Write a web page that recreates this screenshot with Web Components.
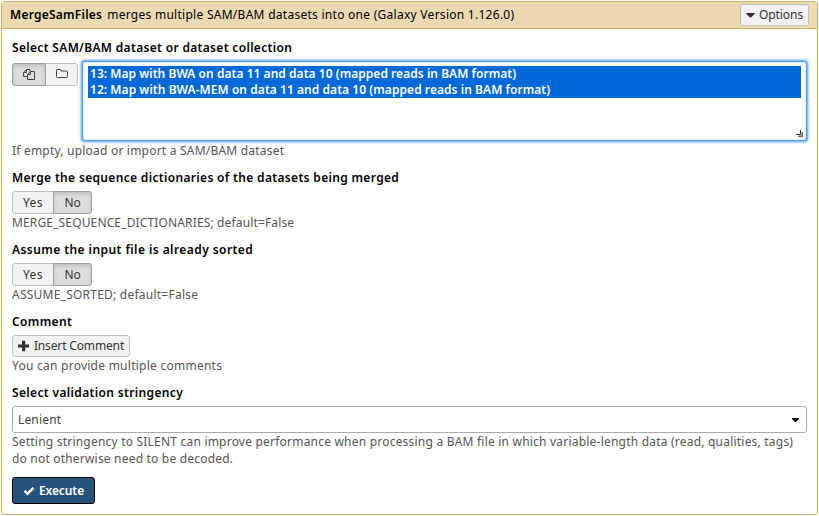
<!DOCTYPE html>
<html lang="en"><head><meta charset="utf-8"><title>MergeSamFiles</title>
<style>
html,body{margin:0;background:#fff}
body{font:12px/16px "Noto Sans","Open Sans",sans-serif;color:#000;width:819px;height:516px;overflow:hidden}
</style></head><body>
<tool-panel>
  <fit-text slot="title" w="92" bold>MergeSamFiles</fit-text>
  <fit-text slot="title" w="407">merges multiple SAM/BAM datasets into one (Galaxy Version 1.126.0)</fit-text>
  <ui-button slot="action" style="width:69px;height:22px;--gap:4px"><ui-icon name="caret"></ui-icon><fit-text w="44">Options</fit-text></ui-button>

  <form-row style="height:130px;--gap:5px">
    <fit-text slot="label" w="280" bold>Select SAM/BAM dataset or dataset collection</fit-text>
    <div style="display:flex;gap:4px;height:81px">
      <button-group style="margin-top:2px">
        <ui-button class="first" pressed style="width:34px"><ui-icon name="files"></ui-icon></ui-button>
        <ui-button class="last" style="width:33px"><ui-icon name="folder"></ui-icon></ui-button>
      </button-group>
      <multi-select>
        <select-option><fit-text w="426" bold>13: Map with BWA on data 11 and data 10 (mapped reads in BAM format)</fit-text></select-option>
        <select-option><fit-text w="460" bold>12: Map with BWA-MEM on data 11 and data 10 (mapped reads in BAM format)</fit-text></select-option>
      </multi-select>
    </div>
    <fit-text slot="help" w="272">If empty, upload or import a SAM/BAM dataset</fit-text>
  </form-row>

  <form-row style="height:72px;--gap:5px">
    <fit-text slot="label" w="387" bold>Merge the sequence dictionaries of the datasets being merged</fit-text>
    <button-group>
      <ui-button class="first" style="width:42px"><fit-text w="20">Yes</fit-text></ui-button>
      <ui-button class="last" pressed style="width:39px"><fit-text w="16">No</fit-text></ui-button>
    </button-group>
    <fit-text slot="help" w="282">MERGE_SEQUENCE_DICTIONARIES; default=False</fit-text>
  </form-row>

  <form-row style="height:72px;--gap:5px">
    <fit-text slot="label" w="241" bold>Assume the input file is already sorted</fit-text>
    <button-group>
      <ui-button class="first" style="width:42px"><fit-text w="20">Yes</fit-text></ui-button>
      <ui-button class="last" pressed style="width:39px"><fit-text w="16">No</fit-text></ui-button>
    </button-group>
    <fit-text slot="help" w="186">ASSUME_SORTED; default=False</fit-text>
  </form-row>

  <form-row style="height:71px;--gap:5px">
    <fit-text slot="label" w="60" bold>Comment</fit-text>
    <ui-button style="width:118px;height:22px;--gap:5px"><ui-icon name="plus"></ui-icon><fit-text w="90">Insert Comment</fit-text></ui-button>
    <fit-text slot="help" w="210">You can provide multiple comments</fit-text>
  </form-row>

  <form-row style="height:92px;--gap:5px">
    <fit-text slot="label" w="171" bold>Select validation stringency</fit-text>
    <drop-down><fit-text w="43">Lenient</fit-text></drop-down>
    <fit-text slot="help" w="781">Setting stringency to SILENT can improve performance when processing a BAM file in which variable-length data (read, qualities, tags)</fit-text>
    <fit-text slot="help" w="221">do not otherwise need to be decoded.</fit-text>
  </form-row>

  <ui-button primary style="width:83px;height:27px;--gap:4px"><ui-icon name="check"></ui-icon><fit-text w="45" bold>Execute</fit-text></ui-button>
</tool-panel>
<script>
function define(name, html, connected) {
  const tpl = document.createElement('template');
  tpl.innerHTML = html;
  customElements.define(name, class extends HTMLElement {
    constructor() { super(); this.attachShadow({ mode: 'open' }).append(tpl.content.cloneNode(true)); }
    connectedCallback() { if (connected) connected.call(this); }
  });
}

// Text run whose letter spacing is adjusted to a given advance width.
define('fit-text', `<style>:host{display:block;white-space:nowrap;width:max-content}:host([bold]){font-weight:600}</style><slot></slot>`,
function () {
  const target = +this.getAttribute('w');
  const n = this.textContent.length;
  const width = this.getBoundingClientRect().width;
  this.style.letterSpacing = ((target + .2 - width) / n).toFixed(3) + 'px';
});

define('tool-panel', `<style>
:host{display:flex;flex-direction:column;box-sizing:border-box;margin:1px 1px 0;height:514px;border:1px solid #d8b365;border-radius:3px;background:#fff;overflow:hidden}
header{display:flex;align-items:center;box-sizing:border-box;height:27px;padding:0 8px;background:#ebd9b2;border-bottom:1px solid #d8b365}
.title{display:flex;gap:5px;flex:1}
main{padding:11px 10px 0}
</style><header><div class="title"><slot name="title"></slot></div><slot name="action"></slot></header><main><slot></slot></main>`);

define('form-row', `<style>
:host{display:flex;flex-direction:column;align-items:flex-start}
.label{height:16px;margin-bottom:var(--gap)}
.body{align-self:stretch}
.help{color:#555;line-height:17px}
</style><div class="label"><slot name="label"></slot></div><div class="body"><slot></slot></div><div class="help"><slot name="help"></slot></div>`);

define('button-group', `<style>:host{display:flex;height:23px;flex:none}::slotted(.first){--radius:3px 0 0 3px}::slotted(.last){--radius:0 3px 3px 0;margin-left:-1px}</style><slot></slot>`);

define('ui-button', `<style>
:host{display:flex;align-items:center;justify-content:center;gap:var(--gap,0);box-sizing:border-box;height:23px;border:1px solid #bfbfbf;border-radius:var(--radius,3px);background:#f2f2f2;color:#333}
:host([pressed]){background:#dedede;border-color:#a0a0a0;box-shadow:inset 0 2px 4px rgba(0,0,0,.15);z-index:1}
:host([primary]){background:#25537b;border-color:#000;color:#fff}
</style><slot></slot>`);

define('multi-select', `<style>
:host{position:relative;display:block;box-sizing:border-box;flex:1;min-width:0;height:80px;margin:0;padding:4px 5px;border:1px solid #5b9ee6;border-radius:3px;box-shadow:0 0 0 1px #84bbf5,0 0 2px 2px #a8d2ff,inset 0 0 2px #8fc3fb;background:#fff}
svg{position:absolute;right:3px;bottom:3px}
</style><slot></slot><svg width="7" height="7" fill="none"><path d="M0 4.500H4.500V0" stroke="#333"/><path d="M2 6.200H6.200V2" stroke="#666" stroke-width="1.500"/></svg>`);

define('select-option', `<style>:host{display:block;height:16px;padding-left:2px;background:#0069d9;color:#fff}</style><slot></slot>`);

define('drop-down', `<style>
:host{display:flex;align-items:center;justify-content:space-between;box-sizing:border-box;height:27px;padding:0 7px 0 5px;border:1px solid #aaa;border-radius:3px;color:#444}
svg{margin-top:1px}
</style><slot></slot><svg width="7" height="4"><path d="M0 0h7v1L4 4H3L0 1z" fill="#000"/></svg>`);

const icons = {
  caret: '<svg width="9" height="12"><path d="M.3 4h8.400v1L5 8.500H4L.3 5z" fill="#333"/></svg>',
  files: '<svg width="12" height="13" viewBox="0 0 12 13" fill="none" stroke="#444" stroke-width="1"><path d="M4.500 8.500H.5v-4l3-3h3.500v2M3.500 1.500v3H.5M4.500 11.500v-5l3-3h4v8zM7.500 3.500v3h-3"/></svg>',
  folder: '<svg width="12" height="13" viewBox="0 0 12 13" fill="none" stroke="#444" stroke-width="1"><path d="M.5 2.200q0-.7.7-.7h3q.8 0 .8.8v.7h5.500q1 0 1 .8v4.700q0 1-1 1H1.500q-1 0-1-1z"/></svg>',
  plus: '<svg width="11" height="12"><path d="M4 .8h3.200v3.700H11v3H7.200v3.700H4V7.500H0v-3h4z" fill="#333"/></svg>',
  check: '<svg width="12" height="12"><path d="M1.500 5.800l3 3 6-6" fill="none" stroke="#fff" stroke-width="2.500"/></svg>'
};
define('ui-icon', `<style>:host{display:flex}svg{display:block}</style>`, function () {
  this.shadowRoot.append(document.createRange().createContextualFragment(icons[this.getAttribute('name')]));
});
</script>
</body></html>
